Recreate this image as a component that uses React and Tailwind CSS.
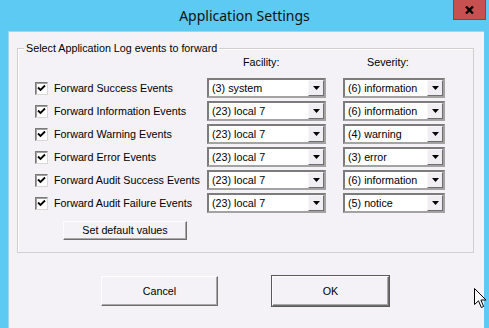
const rows = [
  ["Forward Success Events", "(3) system", "(6) information"],
  ["Forward Information Events", "(23) local 7", "(6) information"],
  ["Forward Warning Events", "(23) local 7", "(4) warning"],
  ["Forward Error Events", "(23) local 7", "(3) error"],
  ["Forward Audit Success Events", "(23) local 7", "(6) information"],
  ["Forward Audit Failure Events", "(23) local 7", "(5) notice"],
];

function Check() {
  return (
    <div className="w-[13px] h-[13px] bg-white border border-t-[#7a7a7a] border-l-[#7a7a7a] border-r-[#d8d8d8] border-b-[#d8d8d8] shadow-[inset_1px_1px_0_#a0a0a0] flex items-center justify-center shrink-0">
      <svg width="9" height="9" viewBox="0 0 9 9">
        <path d="M1 3.5 L3.5 6 L8 1.5" fill="none" stroke="#000" strokeWidth="1.8" />
      </svg>
    </div>
  );
}

function Combo({ text, w }) {
  return (
    <div
      className={`${w} h-[20px] bg-white border-2 border-t-[#7c7c7c] border-l-[#7c7c7c] border-r-[#a3a3a3] border-b-[#a3a3a3] flex items-center shrink-0`}
    >
      <span className="flex-1 pl-[3px] leading-[13px] text-black whitespace-nowrap">{text}</span>
      <div className="w-[16px] h-[16px] bg-[#f0eef2] border border-t-[#f8f8f8] border-l-[#f8f8f8] border-r-[#6e6e6e] border-b-[#6e6e6e] flex items-center justify-center">
        <svg width="7" height="4" viewBox="0 0 7 4">
          <path d="M0 0 L7 0 L3.5 4 Z" fill="#000" />
        </svg>
      </div>
    </div>
  );
}

function Btn({ children, cls, def }) {
  return (
    <div
      className={`${cls} ${def ? "border-[#5a5a5a]" : "border-transparent"} border flex items-center justify-center shrink-0`}
    >
      <div className="w-full h-full bg-[#f4f2f6] border border-t-[#fdfdfd] border-l-[#fdfdfd] border-r-[#6f6f6f] border-b-[#6f6f6f] shadow-[inset_-1px_-1px_0_#a8a8a8] flex items-center justify-center leading-[13px] text-black">
        {children}
      </div>
    </div>
  );
}

export default function App() {
  return (
    <div
      className="relative w-[489px] h-[328px] bg-[#5ccaf2] overflow-hidden flex flex-col text-[10.75px]"
      style={{ fontFamily: '"Liberation Sans", Arial, sans-serif' }}
    >
      <div className="h-[31px] shrink-0 flex items-center justify-center relative">
        <span
          className="text-[14px] text-[#111] leading-none mt-[1px]"
          style={{ fontFamily: '"Noto Sans", "Open Sans", sans-serif' }}
        >
          Application Settings
        </span>
        <div className="absolute right-[3px] top-0 w-[33px] h-[20px] bg-[#c75050] border border-t-0 border-[#9e3a3a] flex items-center justify-center">
          <svg width="9" height="8" viewBox="0 0 9 8">
            <path d="M1 0.5 L8 7.5 M8 0.5 L1 7.5" stroke="#000" strokeWidth="2.4" />
          </svg>
        </div>
      </div>
      <div className="flex-1 ml-[8px] mr-[5px] bg-[#f4f2f6] border-t border-l border-[#9fd6ec] flex flex-col">
        <fieldset className="ml-[8px] mr-[10px] mt-[10px] p-0 border border-[#cfcfcf] shadow-[inset_1px_1px_0_#fff]">
          <legend className="ml-[6px] px-[2px] leading-[13px] text-black">
            Select Application Log events to forward
          </legend>
          <div className="pl-[17px] pb-[11px] flex flex-col">
            <div className="flex mt-[1px] h-[13px] leading-[13px] text-black">
              <span className="ml-[208px] w-[124px]">Facility:</span>
              <span>Severity:</span>
            </div>
            <div className="flex flex-col gap-[3px] mt-[9px]">
              {rows.map(([label, fac, sev]) => (
                <div key={label} className="flex items-center h-[20px]">
                  <Check />
                  <span className="ml-[6px] w-[153px] leading-[13px] text-black whitespace-nowrap">{label}</span>
                  <Combo text={fac} w="w-[119px]" />
                  <div className="w-[17px] shrink-0" />
                  <Combo text={sev} w="w-[102px]" />
                </div>
              ))}
            </div>
            <Btn cls="ml-[27px] mt-[7px] w-[126px] h-[21px]">Set default values</Btn>
          </div>
        </fieldset>
        <div className="flex mt-[22px]">
          <Btn cls="ml-[91px] w-[119px] h-[32px]">Cancel</Btn>
          <Btn cls="ml-[52px] w-[119px] h-[32px]" def>
            OK
          </Btn>
        </div>
      </div>
      <svg
        className="absolute left-[474px] top-[288px]"
        width="13"
        height="21"
        viewBox="0 0 13 21"
      >
        <path
          d="M0.5 0.5 L0.5 16.5 L4.5 12.8 L7.3 19.5 L9.6 18.5 L6.9 12 L12 12 Z"
          fill="#fff"
          stroke="#000"
          strokeWidth="1"
        />
      </svg>
    </div>
  );
}
